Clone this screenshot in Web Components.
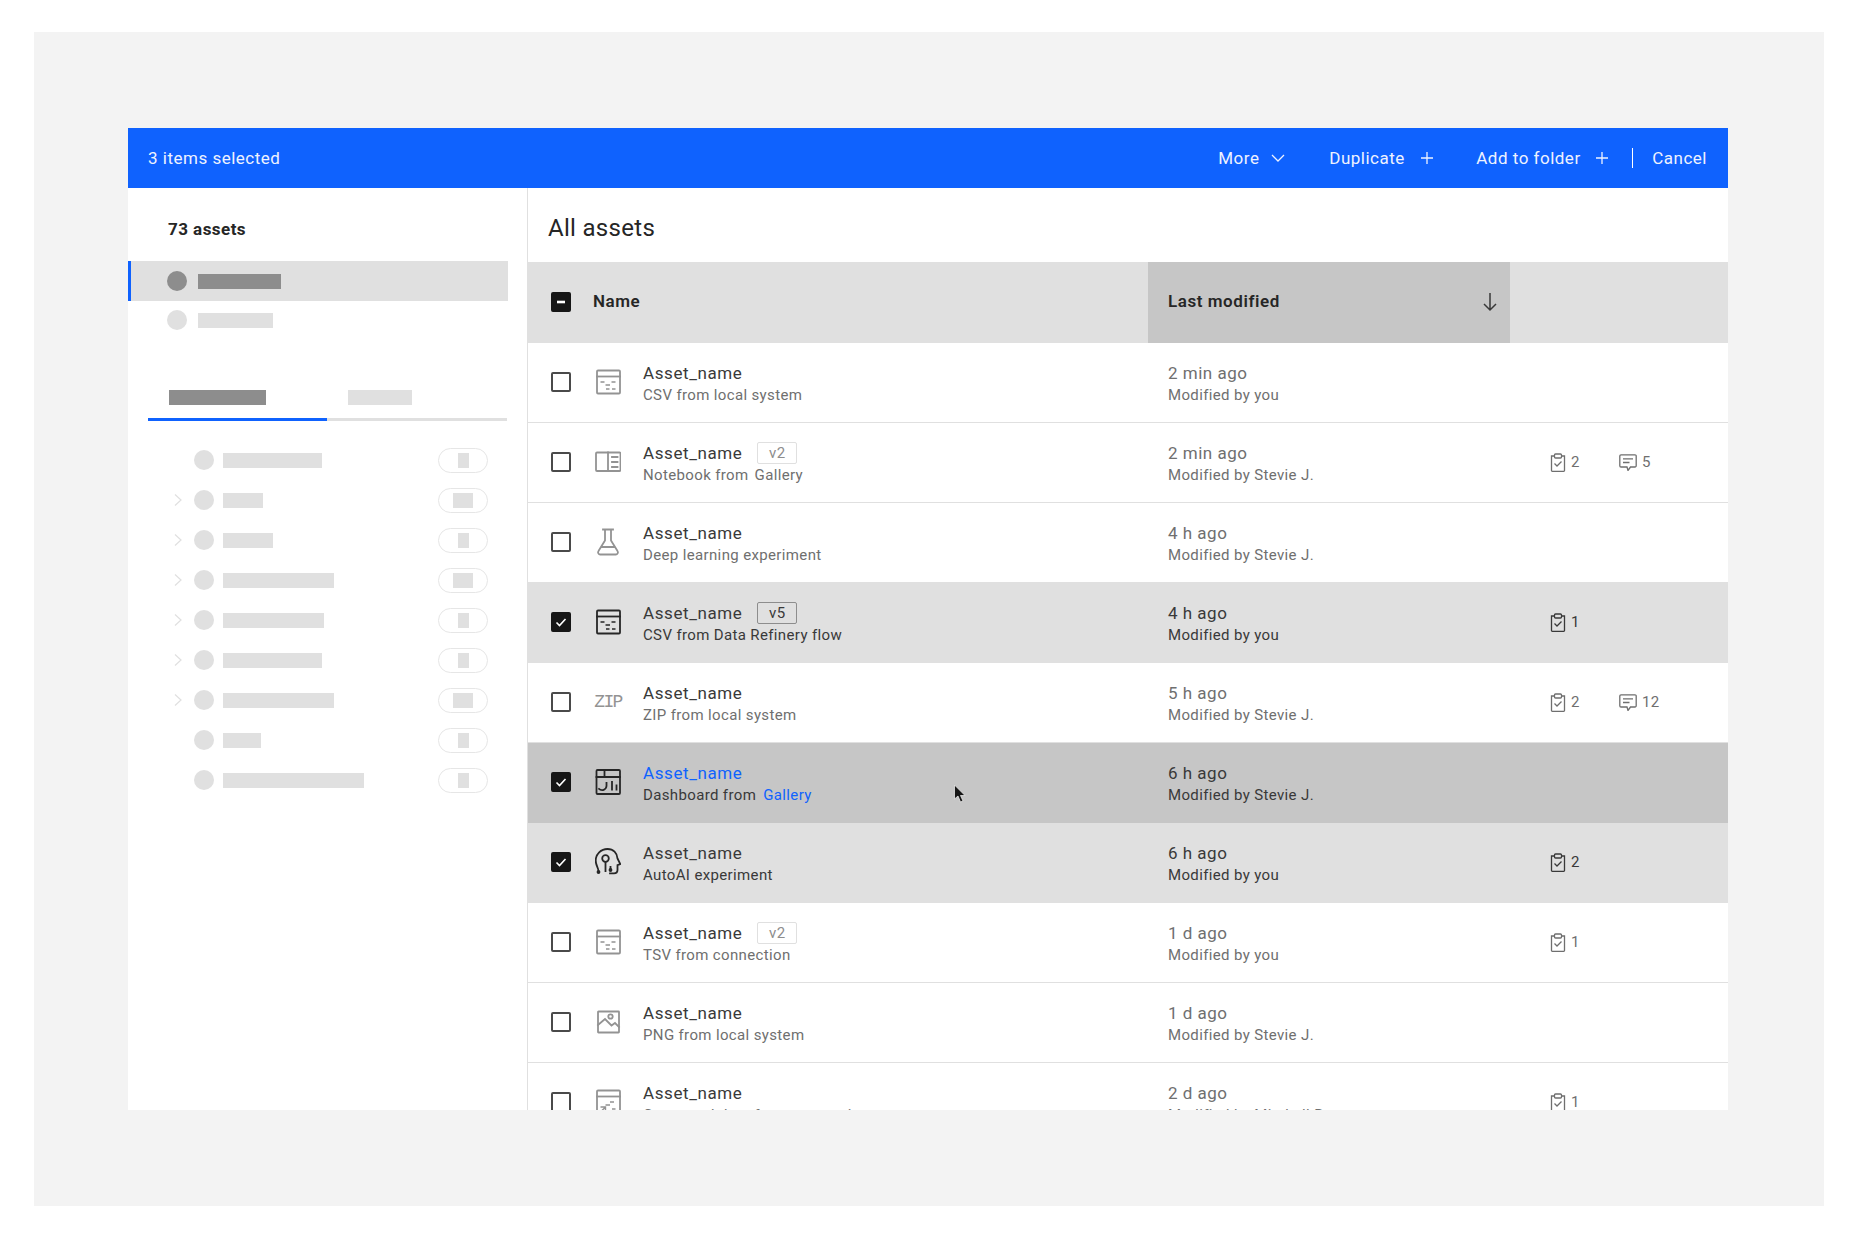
<!DOCTYPE html>
<html lang="en">
<head>
<meta charset="utf-8">
<title>All assets</title>
<style>
  body { margin: 0; background: #fff; font-family: Roboto, "Liberation Sans", sans-serif; }
  a-link { color: #0f62fe; margin-left: 3px; }
</style>
</head>
<body>
<ui-canvas>
  <asset-app>
    <select-bar slot="top"></select-bar>
    <asset-sidebar slot="side"></asset-sidebar>
    <asset-table slot="main">
      <asset-row icon="table" date="2 min ago" by="Modified by you"><span slot="sub">CSV from local system</span></asset-row>
      <asset-row icon="notebook" version="v2" tasks="2" comments="5" date="2 min ago" by="Modified by Stevie J."><span slot="sub">Notebook from <span style="margin-left:2px">Gallery</span></span></asset-row>
      <asset-row icon="flask" date="4 h ago" by="Modified by Stevie J."><span slot="sub">Deep learning experiment</span></asset-row>
      <asset-row state="selected" icon="table" version="v5" tasks="1" date="4 h ago" by="Modified by you"><span slot="sub">CSV from Data Refinery flow</span></asset-row>
      <asset-row icon="zip" tasks="2" comments="12" date="5 h ago" by="Modified by Stevie J."><span slot="sub">ZIP from local system</span></asset-row>
      <asset-row state="hover" icon="dashboard" date="6 h ago" by="Modified by Stevie J."><span slot="sub">Dashboard from <a-link>Gallery</a-link></span></asset-row>
      <asset-row state="selected" icon="head" tasks="2" date="6 h ago" by="Modified by you"><span slot="sub">AutoAI experiment</span></asset-row>
      <asset-row icon="table" version="v2" tasks="1" date="1 d ago" by="Modified by you"><span slot="sub">TSV from connection</span></asset-row>
      <asset-row icon="image" date="1 d ago" by="Modified by Stevie J."><span slot="sub">PNG from local system</span></asset-row>
      <asset-row icon="generated" tasks="1" date="2 d ago" by="Modified by Mitchell R."><span slot="sub">Generated data from connection</span></asset-row>
    </asset-table>
    <ui-cursor slot="over"></ui-cursor>
  </asset-app>
</ui-canvas>

<script>
// Icon paths, all drawn with currentColor on a 26x28 box
const ICONS = {
  table: `<svg width="26" height="26" viewBox="0 0 26 26"><rect x="2" y="1.500" width="23" height="23" rx="1"/><path d="M2 7.500h23"/><path class="thin" d="M5.500 13h4M16.500 13h4M10.500 16h4.500M11 20h3.500M17 20h3.500"/></svg>`,
  generated: `<svg width="26" height="26" viewBox="0 0 26 26"><rect x="2" y="1.500" width="23" height="23" rx="1"/><path d="M2 7.500h23"/><path class="thin" d="M15 13h4M10.500 16h4.500M17 20h3.500M4.500 24l6-6M5.500 18h5v4.500"/></svg>`,
  notebook: `<svg width="26" height="26" viewBox="0 0 26 26"><rect x="1" y="3.500" width="24.500" height="18.500" rx="1"/><path d="M13 3.500v18.500M17 8h5.500M17 13h5.500M17 18h5.500"/></svg>`,
  flask: `<svg width="26" height="28" viewBox="0 0 26 28"><path d="M8 1.500h10M10 1.500v11L3.500 23a2.200 2.200 0 0 0 2 3.500h15a2.200 2.200 0 0 0 2-3.500L16 12.500v-11M6.500 19h13"/></svg>`,
  dashboard: `<svg width="26" height="26" viewBox="0 0 26 26"><rect x="1.500" y="1" width="23.500" height="24" rx="1"/><path d="M1.500 8h23.500M9.500 1v7M4 20a4.500 4.500 0 0 0 7.500-3v-3M17 13v7.500M21.500 16.500v4"/></svg>`,
  head: `<svg width="26" height="28" viewBox="0 0 26 28"><path d="M3.500 23c0-3-2.800-5.500-2.800-10.500C.7 6 6 1 12.500 1 18.500 1 22 5 22.500 10.500l2.800 5.500-2.800 1.200V22c0 2-1.500 3.300-3.500 3.300H15"/><circle cx="10.500" cy="10.500" r="3.300"/><path d="M10.500 13.800V23M15.500 19v2"/><circle cx="3.500" cy="24" r="1" fill="currentColor"/><circle cx="15.500" cy="22" r="1" fill="currentColor"/></svg>`,
  image: `<svg width="26" height="26" viewBox="0 0 26 26"><rect x="3" y="2.500" width="21" height="21" rx=".5"/><path d="M3 16l7-6 6.500 6.500 3.500-2.500 4 4"/><circle cx="15.500" cy="7.500" r="2.200"/></svg>`
};

const boxStyle = `fill:none;stroke:currentColor;stroke-width:1.800;stroke-linecap:square;`;

/**
 * Grey frame around the whole page
 */
class UiCanvas extends HTMLElement {
  constructor() {
    super();
    this.attachShadow({ mode: 'open' }).innerHTML = /*html*/ `
      <style>
        :host {
          display: block;
          margin: 32px 32px 0 34px;
          height: 1174px;
          padding: 96px 0 0 94px;
          box-sizing: border-box;
          background: #f3f3f3;
        }
      </style>
      <slot></slot>
    `;
  }
}

/**
 * App window with top bar, sidebar and main area
 */
class AssetApp extends HTMLElement {
  constructor() {
    super();
    this.attachShadow({ mode: 'open' }).innerHTML = /*html*/ `
      <style>
        :host {
          display: flex;
          flex-direction: column;
          position: relative;
          width: 1600px;
          height: 982px;
          overflow: hidden;
          background: #fff;
        }
        .body {
          display: flex;
          flex: 1;
          min-height: 0;
        }
      </style>
      <slot name="top"></slot>
      <div class="body">
        <slot name="side"></slot>
        <slot name="main"></slot>
      </div>
      <slot name="over"></slot>
    `;
  }
}

/**
 * Blue batch action bar
 */
class SelectBar extends HTMLElement {
  constructor() {
    super();
    this.attachShadow({ mode: 'open' }).innerHTML = /*html*/ `
      <style>
        :host {
          display: flex;
          align-items: center;
          height: 60px;
          padding: 0 21px 0 20px;
          background: #0f62fe;
          color: #eef2ff;
          font-size: 17px;
          letter-spacing: 0.5px;
        }
        .actions {
          display: grid;
          grid-template-columns: 111px 147px 156px 20px auto;
          align-items: center;
          margin-left: auto;
        }
        .action {
          display: flex;
          align-items: center;
          justify-content: space-between;
        }
        .more { width: 67px; }
        .dup { width: 103.500px; }
        .add { width: 131.500px; }
        svg { fill: none; stroke: currentColor; stroke-width: 1.300; display: block; }
        .rule { width: 1px; height: 20px; background: #fff; }
      </style>
      <span>3 items selected</span>
      <div class="actions">
        <div class="action more"><span>More</span><svg width="14" height="14" viewBox="0 0 14 14"><path d="M1 4l6 6 6-6"/></svg></div>
        <div class="action dup"><span>Duplicate</span><svg width="12" height="12" viewBox="0 0 12 12"><path d="M6 0v12M0 6h12"/></svg></div>
        <div class="action add"><span>Add to folder</span><svg width="12" height="12" viewBox="0 0 12 12"><path d="M6 0v12M0 6h12"/></svg></div>
        <div class="rule"></div>
        <span>Cancel</span>
      </div>
    `;
  }
}

/**
 * Skeleton row of the filter list: chevron, dot, bar, pill
 */
class PhRow extends HTMLElement {
  constructor() {
    super();
    this.attachShadow({ mode: 'open' });
  }

  connectedCallback() {
    const chevron = this.hasAttribute('chevron')
      ? `<svg width="8" height="12" viewBox="0 0 8 12"><path d="M1 .5L7 6 1 11.500" fill="none" stroke="#e0e0e0" stroke-width="1.200"/></svg>`
      : '';
    this.shadowRoot.innerHTML = /*html*/ `
      <style>
        :host {
          display: flex;
          align-items: center;
          height: 40px;
          padding-left: 26px;
        }
        .chev { width: 8px; height: 12px; margin-right: 12px; }
        .chev svg { display: block; }
        .dot { width: 20px; height: 20px; border-radius: 50%; background: #e0e0e0; margin-right: 9px; }
        .bar { height: 15px; background: #e0e0e0; }
        .pill {
          display: flex;
          align-items: center;
          justify-content: center;
          box-sizing: border-box;
          width: 50px;
          height: 25px;
          margin-left: auto;
          border: 1.500px solid #e6e6e6;
          border-radius: 13px;
        }
        .pill i { display: block; height: 15px; background: #e0e0e0; }
      </style>
      <div class="chev">${chevron}</div>
      <div class="dot"></div>
      <div class="bar" style="width:${this.getAttribute('bar')}px"></div>
      <div class="pill"><i style="width:${this.getAttribute('pill')}px"></i></div>
    `;
  }
}

/**
 * Left column with the asset count and the skeleton filters
 */
class AssetSidebar extends HTMLElement {
  constructor() {
    super();
    this.attachShadow({ mode: 'open' }).innerHTML = /*html*/ `
      <style>
        :host {
          display: block;
          flex: none;
          box-sizing: border-box;
          width: 400px;
          border-right: 1px solid #e0e0e0;
        }
        h2 {
          margin: 29px 0 20px 40px;
          font-size: 17px;
          line-height: 24px;
          font-weight: 700;
          letter-spacing: 0.45px;
          color: #262626;
        }
        .cat {
          display: flex;
          align-items: center;
          gap: 11px;
          width: 380px;
          height: 40px;
          box-sizing: border-box;
          padding-left: 39px;
        }
        .cat.on {
          background: #e0e0e0;
          border-left: 3px solid #0f62fe;
          padding-left: 36px;
        }
        .cat.next { height: 38px; }
        .cat i { width: 20px; height: 20px; border-radius: 50%; background: #e0e0e0; }
        .cat b { height: 15px; background: #e0e0e0; }
        .cat.on i, .cat.on b { background: #8d8d8d; }
        .tabs {
          display: grid;
          grid-template-columns: 179px 180px;
          margin: 41px 0 19px 20px;
        }
        .tab {
          height: 28px;
          padding: 10px 0 0 21px;
          border-bottom: 3px solid #e0e0e0;
        }
        .tab.on { border-bottom-color: #0f62fe; }
        .tab b { display: block; height: 15px; background: #e0e0e0; }
        .tab.on b { background: #8d8d8d; }
        .list { margin-left: 20px; width: 340px; }
      </style>
      <h2>73 assets</h2>
      <div class="cat on"><i></i><b style="width:83px"></b></div>
      <div class="cat next"><i></i><b style="width:75px"></b></div>
      <div class="tabs">
        <div class="tab on"><b style="width:97px"></b></div>
        <div class="tab"><b style="width:64px"></b></div>
      </div>
      <div class="list">
        <ph-row bar="99" pill="11"></ph-row>
        <ph-row chevron bar="40" pill="20"></ph-row>
        <ph-row chevron bar="50" pill="11"></ph-row>
        <ph-row chevron bar="111" pill="20"></ph-row>
        <ph-row chevron bar="101" pill="11"></ph-row>
        <ph-row chevron bar="99" pill="11"></ph-row>
        <ph-row chevron bar="111" pill="20"></ph-row>
        <ph-row bar="38" pill="11"></ph-row>
        <ph-row bar="141" pill="11"></ph-row>
      </div>
    `;
  }
}

/**
 * Checkbox: off, on or mixed
 */
class UiCheck extends HTMLElement {
  constructor() {
    super();
    this.attachShadow({ mode: 'open' });
  }

  connectedCallback() {
    const state = this.getAttribute('state') || 'off';
    let mark = '';
    if (state === 'on') {
      mark = `<svg width="20" height="20" viewBox="0 0 20 20"><path d="M5.500 10.500l3 3 6-6.500" fill="none" stroke="#fff" stroke-width="1.600"/></svg>`;
    } else if (state === 'mixed') {
      mark = `<svg width="20" height="20" viewBox="0 0 20 20"><rect x="6" y="8.700" width="8" height="2.600" fill="#fff"/></svg>`;
    }
    this.shadowRoot.innerHTML = /*html*/ `
      <style>
        :host {
          display: block;
          position: relative;
          flex: none;
          box-sizing: border-box;
          width: 20px;
          height: 20px;
          border-radius: 2px;
          border: 2px solid #4a4a4a;
          background: ${state === 'off' ? '#fff' : '#161616'};
        }
        :host([state="on"]), :host([state="mixed"]) { border-color: #161616; }
        svg { position: absolute; left: -2px; top: -2px; }
      </style>
      ${mark}
    `;
  }
}

class AssetTable extends HTMLElement {
  constructor() {
    super();
    this.attachShadow({ mode: 'open' }).innerHTML = /*html*/ `
      <style>
        :host {
          display: block;
          flex: 1;
          min-width: 0;
          color: #262626;
        }
        h1 {
          margin: 0;
          height: 74px;
          padding-left: 20px;
          font-size: 24px;
          font-weight: 400;
          line-height: 80px;
          letter-spacing: 0.3px;
          box-sizing: border-box;
        }
        .head {
          display: grid;
          grid-template-columns: 620px 362px 1fr;
          height: 81px;
          background: #e0e0e0;
          font-size: 17px;
          font-weight: 600;
          letter-spacing: 0.56px;
        }
        .cell { display: flex; align-items: center; padding-bottom: 2px; }
        .cell span { margin-bottom: 2px; }
        .name { padding-left: 23px; gap: 22px; }
        .sort {
          background: #c6c6c6;
          padding: 0 12px 2px 20px;
          justify-content: space-between;
        }
      </style>
      <h1>All assets</h1>
      <div class="head">
        <div class="cell name"><ui-check state="mixed"></ui-check><span>Name</span></div>
        <div class="cell sort">
          <span>Last modified</span>
          <svg width="16" height="20" viewBox="0 0 16 20"><path d="M8 1v17M2 12l6 6 6-6" fill="none" stroke="#393939" stroke-width="1.500"/></svg>
        </div>
        <div class="cell"></div>
      </div>
      <slot></slot>
    `;
  }
}

/**
 * One asset in the table, texts come in through slots
 */
class AssetRow extends HTMLElement {
  constructor() {
    super();
    this.attachShadow({ mode: 'open' });
  }

  connectedCallback() {
    const state = this.getAttribute('state');
    const icon = this.getAttribute('icon');
    const version = this.getAttribute('version');
    const tasks = this.getAttribute('tasks');
    const comments = this.getAttribute('comments');
    const glyph = icon === 'zip' ? '<span class="zip">ZIP</span>' : ICONS[icon];

    this.shadowRoot.innerHTML = /*html*/ `
      <style>
        :host {
          display: grid;
          grid-template-columns: 620px 362px 1fr;
          box-sizing: border-box;
          height: 80px;
          border-bottom: 1px solid #e0e0e0;
          font-size: 15px;
          letter-spacing: 0.36px;
          color: #6f6f6f;
          --name: #393939;
          --icon: #939393;
        }
        :host([state]) { color: #393939; --icon: #262626; border-bottom-color: transparent; }
        :host([state="selected"]) { background: #e0e0e0; }
        :host([state="hover"]) { background: #c6c6c6; --name: #0f62fe; }
        .cell { display: flex; align-items: center; min-width: 0; }
        .asset { padding: 0 0 2px 23px; }
        .icon {
          display: flex;
          align-items: center;
          justify-content: center;
          flex: none;
          width: 26px;
          margin-left: 24px;
          margin-right: 22px;
          color: var(--icon);
        }
        .icon svg { display: block; ${boxStyle} }
        .icon .thin { stroke-width: 1.400; stroke-linecap: butt; }
        .zip {
          font: 18px "Liberation Mono", monospace;
          letter-spacing: -1.600px;
          white-space: nowrap;
        }
        .text { padding-top: 3px; line-height: 22px; white-space: nowrap; }
        .asset .text { padding-top: 5px; }
        .top {
          display: flex;
          align-items: center;
          gap: 15px;
          height: 22px;
          font-size: 17px;
          letter-spacing: 0.6px;
          color: var(--name);
        }
        .date .top { color: inherit; letter-spacing: 0.5px; }
        .tag {
          box-sizing: border-box;
          width: 40px;
          height: 22px;
          border: 1px solid #e0e0e0;
          border-radius: 2px;
          font-size: 15px;
          line-height: 20px;
          text-align: center;
          color: #8d8d8d;
        }
        :host([state]) .tag { border-color: #8d8d8d; color: #393939; }
        .date { padding-left: 20px; }
        .stats { padding: 0 0 1px 40px; }
        .stat {
          display: flex;
          align-items: center;
          gap: 5px;
        }
        .stat.task { width: 69px; }
        .stats svg { fill: none; stroke: currentColor; stroke-width: 1.300; display: block; }
      </style>
      <div class="cell asset">
        <ui-check state="${state ? 'on' : 'off'}"></ui-check>
        <div class="icon">${glyph}</div>
        <div class="text">
          <div class="top"><span>Asset_name</span>${version ? `<span class="tag">${version}</span>` : ''}</div>
          <slot name="sub"></slot>
        </div>
      </div>
      <div class="cell date">
        <div class="text">
          <div class="top"><span>${this.getAttribute('date')}</span></div>
          <span>${this.getAttribute('by')}</span>
        </div>
      </div>
      <div class="cell stats">
        ${tasks ? `<div class="stat task"><svg width="16" height="19" viewBox="0 0 16 19"><path d="M4.500 3H1.500v14.500a.8.8 0 0 0 .8.8h11.400a.8.8 0 0 0 .8-.8V3h-3"/><rect x="4.500" y="1" width="7" height="4" rx="1"/><path d="M4.500 10.500l2.500 2.500 4.500-4.500"/></svg><span>${tasks}</span></div>` : ''}
        ${comments ? `<div class="stat"><svg width="18" height="17" viewBox="0 0 18 17"><path d="M8 13H2a1.200 1.200 0 0 1-1.200-1.200V2A1.200 1.200 0 0 1 2 .8h14A1.200 1.200 0 0 1 17.200 2v9.800A1.200 1.200 0 0 1 16 13h-4.500L9 16.500zM4 4.800h10M4 8.500h6.500"/></svg><span>${comments}</span></div>` : ''}
      </div>
    `;
  }
}

/**
 * Link text inside a row
 */
class ALink extends HTMLElement {
  constructor() {
    super();
    this.attachShadow({ mode: 'open' }).innerHTML = `<style>:host { display: inline; }</style><slot></slot>`;
  }
}

/**
 * Mouse pointer over the hovered row
 */
class UiCursor extends HTMLElement {
  constructor() {
    super();
    this.attachShadow({ mode: 'open' }).innerHTML = /*html*/ `
      <style>
        :host { display: block; position: absolute; left: 825px; top: 656px; width: 14px; height: 20px; }
      </style>
      <svg width="14" height="20" viewBox="0 0 14 20">
        <path d="M1.500 1v14l3.500-3 2.500 6 2.500-1-2.500-5.500h4.500z" fill="#161616" stroke="#e6e6e6" stroke-width=".8"/>
      </svg>
    `;
  }
}

// Register custom elements
customElements.define('ui-canvas', UiCanvas);
customElements.define('asset-app', AssetApp);
customElements.define('select-bar', SelectBar);
customElements.define('ph-row', PhRow);
customElements.define('asset-sidebar', AssetSidebar);
customElements.define('ui-check', UiCheck);
customElements.define('asset-table', AssetTable);
customElements.define('asset-row', AssetRow);
customElements.define('a-link', ALink);
customElements.define('ui-cursor', UiCursor);
</script>
</body>
</html>
